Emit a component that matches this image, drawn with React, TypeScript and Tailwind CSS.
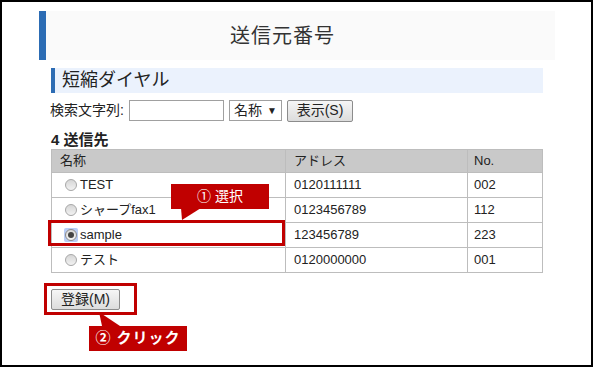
import React from "react";

const font = { fontFamily: '"Liberation Sans", "Noto Sans CJK JP", sans-serif' };

const rows = [
  { name: "TEST", addr: "0120111111", no: "002" },
  { name: "シャープfax1", addr: "0123456789", no: "112" },
  { name: "sample", addr: "123456789", no: "223", checked: true },
  { name: "テスト", addr: "0120000000", no: "001" },
];

function Radio({ checked }: { checked?: boolean }) {
  if (checked) {
    return (
      <span className="flex h-[14px] w-[14px] items-center justify-center rounded-[2px] bg-[#b9cdf5]">
        <span className="flex h-[12px] w-[12px] items-center justify-center rounded-full border border-[#8a8a8a] bg-gradient-to-b from-[#d8d8d8] to-[#f4f4f4]">
          <span className="h-[6px] w-[6px] rounded-full bg-[#444]" />
        </span>
      </span>
    );
  }
  return (
    <span className="flex h-[14px] w-[14px] items-center justify-center">
      <span className="h-[12px] w-[12px] rounded-full border border-[#a8a8a8] bg-gradient-to-b from-[#d6d6d6] to-[#f2f2f2]" />
    </span>
  );
}

export default function App() {
  return (
    <div
      className="relative box-border h-[367px] w-[593px] border-2 border-black bg-white pl-[37px] pt-[9px] text-[#222]"
      style={font}
    >
      {/* Title */}
      <div className="flex h-[49px] w-[516px] items-center border-l-[7px] border-[#2c6cb4] bg-[#fafafa] pl-[184px]">
        <span className="text-[20px] tracking-[1px] text-[#333]">送信元番号</span>
      </div>

      <div className="ml-[12px] w-[492px]">
        {/* Section header */}
        <div className="mt-[8px] flex h-[25px] items-center border-l-[4px] border-[#2c6cb4] bg-[#ebf2fd] pl-[7px]">
          <span className="text-[18px] text-[#222]">短縮ダイヤル</span>
        </div>

        {/* Search */}
        <div className="mt-[7px] flex h-[21px] items-center text-[14px]">
          <span className="-ml-[1px] w-[79px]">検索文字列:</span>
          <span className="h-[21px] w-[95px] border border-[#a0a0a0] bg-white" />
          <span className="ml-[5px] flex h-[21px] w-[53px] items-center border border-[#a0a0a0] bg-white pl-[4px]">
            名称<span className="ml-[5px] text-[10px]">▼</span>
          </span>
          <span className="ml-[5px] flex h-[22px] w-[66px] items-center justify-center rounded-[2px] border border-[#8c8c8c] bg-gradient-to-b from-[#f6f6f6] to-[#dcdcdc]">
            表示(S)
          </span>
        </div>

        <div className="mt-[10px] text-[15px] font-bold leading-[18px]">4 送信先</div>

        {/* Table */}
        <div className="relative">
          <table className="w-[492px] border-collapse text-[13px]">
            <thead>
              <tr className="h-[23px] bg-[#c9c9c9]">
                <th className="w-[234px] border border-[#bdbdbd] pl-[8px] text-left font-normal">名称</th>
                <th className="w-[182px] border border-[#bdbdbd] pl-[8px] text-left font-normal">アドレス</th>
                <th className="border border-[#bdbdbd] pl-[6px] text-left font-normal">No.</th>
              </tr>
            </thead>
            <tbody>
              {rows.map((r) => (
                <tr key={r.no} className="h-[25px]">
                  <td className="border border-[#bdbdbd] pl-[12px]">
                    <span className="flex items-center gap-[2px]">
                      <Radio checked={r.checked} />
                      {r.name}
                    </span>
                  </td>
                  <td className="border border-[#bdbdbd] pl-[8px]">{r.addr}</td>
                  <td className="border border-[#bdbdbd] pl-[6px]">{r.no}</td>
                </tr>
              ))}
            </tbody>
          </table>

          {/* selection highlight */}
          <div className="absolute left-[-3px] top-[71px] h-[26px] w-[237px] border-[3px] border-[#c00000]" />

          {/* callout 1 */}
          <div className="absolute left-[120px] top-[35px] flex h-[25px] w-[98px] items-center justify-center bg-[#c00000] text-[14px] text-white">
            ① 選択
          </div>
          <svg className="absolute left-[120px] top-[59px]" width="40" height="14" viewBox="0 0 40 14">
            <polygon points="10,0 30,0 11,12" fill="#c00000" />
          </svg>
        </div>

        {/* Register */}
        <div className="relative mt-[16px] h-[60px]">
          <span className="flex h-[21px] w-[69px] items-center justify-center rounded-[2px] border border-[#8c8c8c] bg-gradient-to-b from-[#f6f6f6] to-[#dcdcdc] text-[14px]">
            登録(M)
          </span>
          <div className="absolute left-[-7px] top-[-6px] h-[32px] w-[93px] border-[3px] border-[#c00000]" />
          <svg className="absolute left-[45px] top-[23px]" width="30" height="14" viewBox="0 0 30 14">
            <polygon points="3,0 6,14 24,14" fill="#c00000" />
          </svg>
          <div className="absolute left-[38px] top-[37px] flex h-[25px] w-[98px] items-center justify-center bg-[#c00000] text-[15px] font-bold tracking-[1px] text-white">
            ② クリック
          </div>
        </div>
      </div>
    </div>
  );
}
